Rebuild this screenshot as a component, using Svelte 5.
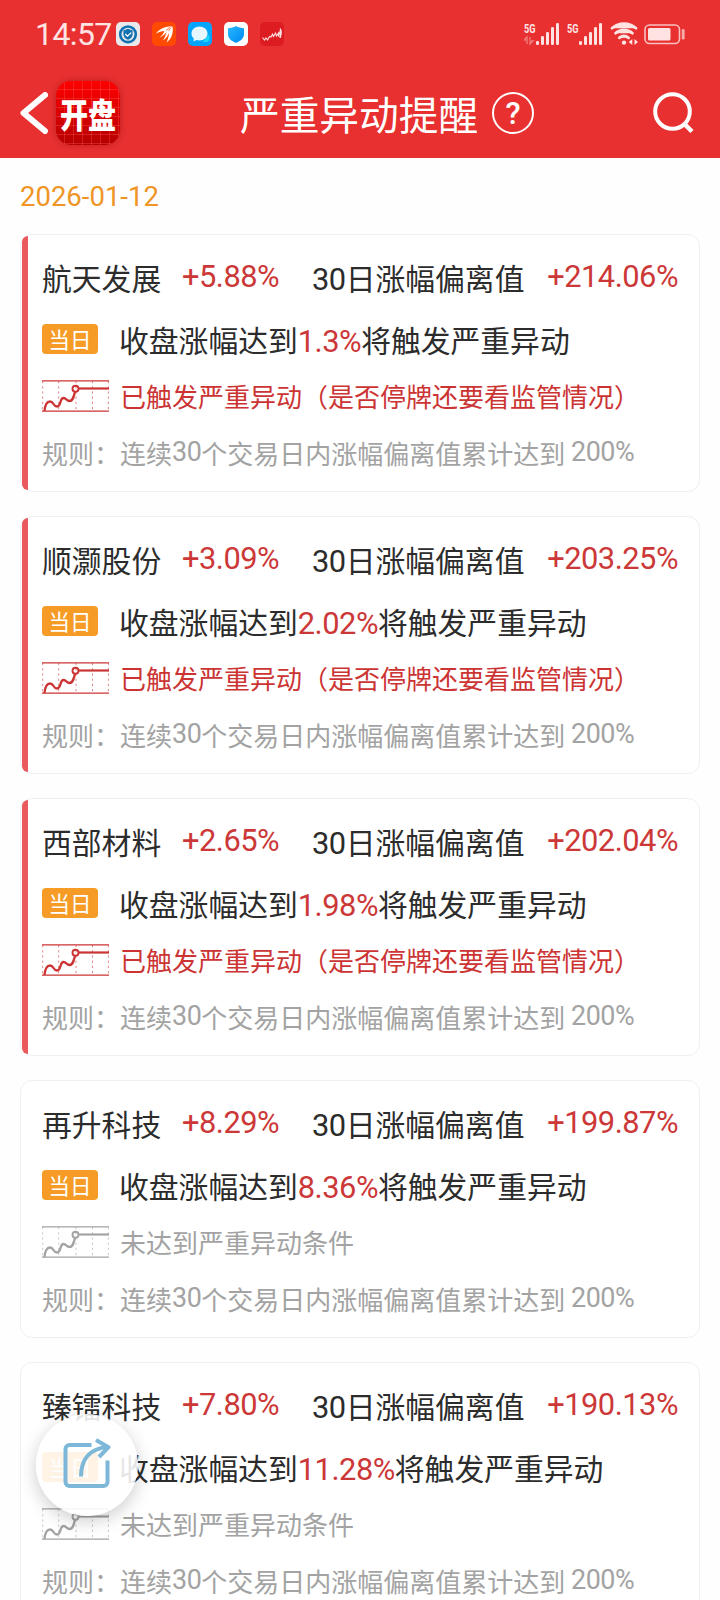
<script>
  const date = '2026-01-12';
  const stocks = [
    { name: '航天发展', pct: '+5.88%', dev: '+214.06%', need: '1.3%', hit: true },
    { name: '顺灏股份', pct: '+3.09%', dev: '+203.25%', need: '2.02%', hit: true },
    { name: '西部材料', pct: '+2.65%', dev: '+202.04%', need: '1.98%', hit: true },
    { name: '再升科技', pct: '+8.29%', dev: '+199.87%', need: '8.36%', hit: false },
    { name: '臻镭科技', pct: '+7.80%', dev: '+190.13%', need: '11.28%', hit: false }
  ];
  const bars = [4, 9, 13, 18, 22];
</script>

{#snippet signal(data)}
  <svg class="signal" width="36" height="24" viewBox="0 0 36 24">
    <text x="0" y="10.5" font-size="12" font-weight="700" textLength="11.5" lengthAdjust="spacingAndGlyphs">5G</text>
    {#if data}
      <path d="M3 22v-7l-3 3h2M6 15v7l3-3H7" fill="none" stroke="#fff" stroke-width="1.4" opacity=".35" />
    {/if}
    {#each bars as h, i}
      <rect x={12 + i * 5} y={23 - h} width="3" height={h} rx="1.2" />
    {/each}
  </svg>
{/snippet}

<div class="page">
  <header>
    <div class="status">
      <span class="time">14:57</span>
      <div class="apps">
        <svg viewBox="0 0 24 24"><rect width="24" height="24" rx="5" fill="#e9e9ec" /><circle cx="12" cy="12.3" r="7.8" fill="#e9e9ec" stroke="#1272b0" stroke-width="2.6" /><path d="M12 6.8l4.6 1.6v3.8c0 2.7-2 4.5-4.6 5.6-2.600-1.100-4.600-2.900-4.600-5.600V8.400z" fill="#1272b0" /><path d="M9.300 12l2.200 2.200 3.700-3.600" fill="none" stroke="#fff" stroke-width="1.300" /></svg>
        <svg viewBox="0 0 24 24"><rect width="24" height="24" rx="5" fill="#ff4a00" /><path d="M4 11.500C8 6 14 4 20.500 4.500 21.500 10 20 17 14.500 20.500c1.500-3.500 2.500-7 2.500-9.500-1.500 3-3 5.500-6 7.500 1.500-2.500 2.800-5.500 3.500-8.500C12.500 12.500 10.500 14.500 7.500 15.500c2.500-2 4-4 5-6.500C9.500 9 7 10 4 11.500z" fill="#fff" /><path d="M14 8.500l3.500-3M16.500 9l2.500-3.500" stroke="#ff4a00" stroke-width=".8" /></svg>
        <svg viewBox="0 0 24 24"><rect width="24" height="24" rx="5" fill="#03a4fb" /><path d="M20.500 12.500a5.500 5.500 0 0 1-1 7.500h-5z" fill="#19d5f8" /><path d="M11.500 4.500c4.500 0 8 3 8 7s-3.500 7-8 7c-1 0-2 0-3-.4L5.500 19.500l.3-3C4.300 15.200 3.500 13.500 3.500 11.500c0-4 3.500-7 8-7z" fill="#e6f7ff" /></svg>
        <svg viewBox="0 0 24 24">
          <defs><linearGradient id="shield" x1="0" y1="0" x2="1" y2="1"><stop offset="0" stop-color="#27b9ff" /><stop offset="1" stop-color="#0088f4" /></linearGradient></defs>
          <rect width="24" height="24" rx="5" fill="#fff" /><path d="M12 4c2.500 1.500 5 2 8 2.200v6c0 4-3.500 6.800-8 8.600-4.500-1.800-8-4.600-8-8.600v-6C7 6 9.500 5.500 12 4z" fill="url(#shield)" />
        </svg>
        <svg viewBox="0 0 24 24"><rect width="24" height="24" rx="5" fill="#dc1c20" /><path d="M2.500 15.500l2 2.500 1.500-2 1.500 2 2-3.500 1.500.500 1.500-3 1 2.500 2-3.500 1 3 2-3v3.500l2-6.500v8M20 6.500c2 2 2 7-.5 9" fill="none" stroke="#fff" stroke-width="1.100" opacity=".85" /></svg>
      </div>
      <div class="net">
        {@render signal(true)}
        {@render signal(false)}
        <svg width="28" height="24" viewBox="0 0 28 24" fill="none" stroke="currentColor" stroke-width="2.800" stroke-linecap="round">
          <path d="M2 6.200C9 .1 19 .1 26 6.200" />
          <path d="M5.500 11.200c5-4.400 12-4.400 17 0" />
          <path d="M9.300 15.800c2.800-2.300 6.500-2.300 9.300 0" />
          <circle cx="14" cy="20.600" r="2.200" fill="currentColor" stroke="none" />
          <path d="M22.300 17v6l-3.600-3zM24.500 17v6l3.600-3z" fill="currentColor" stroke="none" />
        </svg>
        <svg class="battery" width="42" height="22" viewBox="0 0 42 22">
          <rect x="1" y="2" width="34.500" height="18.500" rx="4.500" fill="none" stroke="currentColor" stroke-width="1.600" opacity=".8" />
          <rect x="4" y="5" width="22.500" height="12.500" rx="1.500" />
          <rect x="37.800" y="6" width="2.800" height="10.500" rx="1.300" opacity=".7" />
        </svg>
      </div>
    </div>

    <div class="nav">
      <svg class="back" width="28" height="42" viewBox="0 0 28 42"><path d="M25 3L3.500 21 25 39" fill="none" stroke="#fff" stroke-width="6" stroke-linecap="round" stroke-linejoin="round" /></svg>
      <div class="logo"><span>开盘</span></div>
      <h1>严重异动提醒</h1>
      <span class="help">?</span>
      <svg class="search" width="42" height="42" viewBox="0 0 42 42" fill="none" stroke="#fff"><circle cx="19.500" cy="19.500" r="17.300" stroke-width="4" /><path d="M31.500 32l7.500 7.500" stroke-width="4.500" /></svg>
    </div>
  </header>

  <main>
    <div class="date">{date}</div>
    {#each stocks as s}
      <section class="card" class:hit={s.hit}>
        <i class="stripe"></i>
        <div class="body">
          <div class="row head">
            <span>{s.name}</span>
            <span class="num">{s.pct}</span>
            <span><span class="digits">30</span>日涨幅偏离值</span>
            <span class="num dev">{s.dev}</span>
          </div>
          <div class="row today">
            <span class="badge">当日</span>
            <span>收盘涨幅达到<span class="num">{s.need}</span>将触发严重异动</span>
          </div>
          <div class="row state">
            <svg width="67" height="32" viewBox="0 0 67 32" fill="none" stroke="currentColor">
              <path d="M0 .8h67M0 31.200h67" stroke-width="1.200" />
              <path d="M.7 1v30M16.700 1v30M34 1v30M50.500 1v30M66.400 1v30" stroke-width="1" stroke-dasharray="2.200 3" opacity=".6" />
              <path d="M2.500 31C3 26 4.500 21.500 8 21.500c4 0 3 5 7 5 4.500 0 2.500-8.500 6.500-8.500 3 0 3 3 6 3 3.500 0 4-4 5.500-9" stroke-width="2.300" />
              <circle cx="33.500" cy="8.800" r="3" stroke-width="1.900" />
              <path d="M36.500 8.500H67" stroke-width="2.200" />
            </svg>
            <span>{s.hit ? '已触发严重异动（是否停牌还要看监管情况）' : '未达到严重异动条件'}</span>
          </div>
          <div class="row rule">规则：连续<span class="digits">30</span>个交易日内涨幅偏离值累计达到&nbsp;<span class="digits">200%</span></div>
        </div>
      </section>
    {/each}
  </main>

  <button class="share" aria-label="分享">
    <svg width="48" height="50" viewBox="0 0 48 50" fill="none" stroke="#7db8d8" stroke-width="4" stroke-linejoin="round">
      <path d="M28.500 7H6.500a4 4 0 0 0-4 4v33a4 4 0 0 0 4 4h34a4 4 0 0 0 4-4V22.500" />
      <path d="M18 38.500C18 22 26 10.500 45 9" />
      <path d="M33 2l12.500 7.200L36 19" />
    </svg>
  </button>
</div>

<style>
  :global(body) { background: #fefefe; }
  .page { position: relative; height: 1600px; overflow: hidden; font-family: "Noto Sans CJK SC", sans-serif; color: #2c2c2c; }
  header { height: 158px; background: #e83030; color: #ffe3e3; }

  .status { display: flex; align-items: center; height: 68px; padding: 0 34px 0 35px; }
  .time { width: 81px; font: 400 32px/1 Roboto, sans-serif; letter-spacing: -.6px; }
  .apps { display: flex; gap: 12px; }
  .apps svg { width: 24px; height: 24px; }
  .net { display: flex; align-items: center; margin-left: auto; }
  .net svg { fill: currentColor; }
  .signal { margin-right: 7px; font-family: Roboto, sans-serif; }
  .net .battery { margin-left: 6px; }

  .nav { display: flex; align-items: center; height: 90px; padding: 0 25px 0 20px; }
  .logo { display: flex; align-items: center; justify-content: center; width: 64px; height: 64px; margin-left: 8px; border-radius: 15px; box-shadow: 0 0 6px rgba(120, 0, 0, .4);
    background: repeating-linear-gradient(90deg, transparent 0 8px, rgba(255, 90, 90, .35) 8px 9px), repeating-linear-gradient(transparent 0 8px, rgba(255, 90, 90, .35) 8px 9px), linear-gradient(#fe0000, #b50000); }
  .logo span { color: #fff; font-size: 28px; font-weight: 900; line-height: 36px; transform: scaleY(1.22); }
  h1 { margin: 0 0 0 120px; font-size: 39.700px; line-height: 60px; font-weight: 400; color: #fff; }
  .help { display: flex; align-items: center; justify-content: center; box-sizing: border-box; width: 42px; height: 42px; margin-left: 14px; border: 2px solid #fff; border-radius: 50%; color: #fff; font: 500 31px/1 Roboto, sans-serif; }
  .search { margin-left: auto; }

  main { padding: 0 20px; }
  .date { height: 76px; line-height: 78px; font-family: Roboto, sans-serif; font-size: 27.500px; color: #ee9526; }
  .card { display: flex; box-sizing: border-box; height: 258px; margin-bottom: 24px; border: 1px solid #f0f0f0; border-radius: 12px; background: #fff; }
  .stripe { width: 6px; margin: 1px 0 1px 1px; border-radius: 6px 0 0 6px; }
  .hit .stripe { background: #ea595b; }
  .body { flex: 1; padding: 11px 21px 0 14px; }
  .row { display: flex; align-items: center; white-space: nowrap; }
  .head { display: grid; grid-template-columns: 140px 130px 1fr auto; height: 62px; font-size: 29.800px; line-height: 40px; }
  .today { height: 61px; font-size: 29.800px; line-height: 40px; }
  .state { height: 54px; gap: 11px; font-size: 26px; line-height: 36px; color: #a3a3a3; }
  .rule { height: 59px; font-size: 26px; line-height: 36px; color: #a3a3a3; }
  .hit .state { color: #cc3434; }
  .num, .digits { font-family: Roboto, sans-serif; font-size: 1.035em; line-height: 1; letter-spacing: -.5px; }
  .num { color: #cc3838; }
  .badge { width: 56px; height: 30px; margin-right: 21px; border-radius: 4px; background: #f69b26; color: #fff; font-size: 21.500px; line-height: 29px; text-align: center; }

  .share { position: absolute; left: 36px; top: 1414px; display: flex; align-items: center; justify-content: center; width: 102px; height: 102px; padding: 0 0 4px; border: 0; border-radius: 50%; background: rgba(255, 255, 255, .88); box-shadow: 0 5px 18px rgba(0, 0, 0, .2); }
</style>
